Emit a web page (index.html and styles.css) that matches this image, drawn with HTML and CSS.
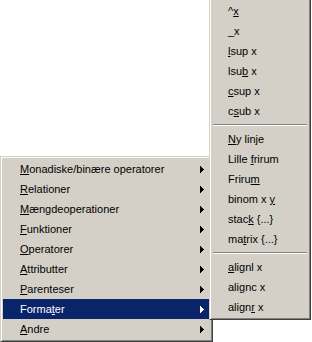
FILE: index.html
```html
<!DOCTYPE html>
<html lang="da">
<head>
<meta charset="utf-8">
<title>Menu</title>
<link rel="stylesheet" href="styles.css">
</head>
<body>
<div class="menu main">
  <div class="item"><span class="label"><u>M</u>onadiske/binære operatorer</span><svg class="arrow" width="4" height="7" viewBox="0 0 4 7"><rect x="0" y="0" width="1" height="7"/><rect x="1" y="1" width="1" height="5"/><rect x="2" y="2" width="1" height="3"/><rect x="3" y="3" width="1" height="1"/></svg></div>
  <div class="item"><span class="label"><u>R</u>elationer</span><svg class="arrow" width="4" height="7" viewBox="0 0 4 7"><rect x="0" y="0" width="1" height="7"/><rect x="1" y="1" width="1" height="5"/><rect x="2" y="2" width="1" height="3"/><rect x="3" y="3" width="1" height="1"/></svg></div>
  <div class="item"><span class="label"><u>M</u>ængdeoperationer</span><svg class="arrow" width="4" height="7" viewBox="0 0 4 7"><rect x="0" y="0" width="1" height="7"/><rect x="1" y="1" width="1" height="5"/><rect x="2" y="2" width="1" height="3"/><rect x="3" y="3" width="1" height="1"/></svg></div>
  <div class="item"><span class="label"><u>F</u>unktioner</span><svg class="arrow" width="4" height="7" viewBox="0 0 4 7"><rect x="0" y="0" width="1" height="7"/><rect x="1" y="1" width="1" height="5"/><rect x="2" y="2" width="1" height="3"/><rect x="3" y="3" width="1" height="1"/></svg></div>
  <div class="item"><span class="label"><u>O</u>peratorer</span><svg class="arrow" width="4" height="7" viewBox="0 0 4 7"><rect x="0" y="0" width="1" height="7"/><rect x="1" y="1" width="1" height="5"/><rect x="2" y="2" width="1" height="3"/><rect x="3" y="3" width="1" height="1"/></svg></div>
  <div class="item"><span class="label"><u>A</u>ttributter</span><svg class="arrow" width="4" height="7" viewBox="0 0 4 7"><rect x="0" y="0" width="1" height="7"/><rect x="1" y="1" width="1" height="5"/><rect x="2" y="2" width="1" height="3"/><rect x="3" y="3" width="1" height="1"/></svg></div>
  <div class="item"><span class="label"><u>P</u>arenteser</span><svg class="arrow" width="4" height="7" viewBox="0 0 4 7"><rect x="0" y="0" width="1" height="7"/><rect x="1" y="1" width="1" height="5"/><rect x="2" y="2" width="1" height="3"/><rect x="3" y="3" width="1" height="1"/></svg></div>
  <div class="item active"><span class="label">Forma<u>t</u>er</span><svg class="arrow" width="4" height="7" viewBox="0 0 4 7"><rect x="0" y="0" width="1" height="7"/><rect x="1" y="1" width="1" height="5"/><rect x="2" y="2" width="1" height="3"/><rect x="3" y="3" width="1" height="1"/></svg></div>
  <div class="item"><span class="label"><u>A</u>ndre</span><svg class="arrow" width="4" height="7" viewBox="0 0 4 7"><rect x="0" y="0" width="1" height="7"/><rect x="1" y="1" width="1" height="5"/><rect x="2" y="2" width="1" height="3"/><rect x="3" y="3" width="1" height="1"/></svg></div>
</div>
<div class="menu sub">
  <div class="item"><span class="label">^<u>x</u></span></div>
  <div class="item"><span class="label">_x</span></div>
  <div class="item"><span class="label"><u>l</u>sup x</span></div>
  <div class="item"><span class="label">lsu<u>b</u> x</span></div>
  <div class="item"><span class="label"><u>c</u>sup x</span></div>
  <div class="item"><span class="label">c<u>s</u>ub x</span></div>
  <div class="sep"></div>
  <div class="item"><span class="label"><u>N</u>y linje</span></div>
  <div class="item"><span class="label">Lille <u>f</u>rirum</span></div>
  <div class="item"><span class="label">Friru<u>m</u></span></div>
  <div class="item"><span class="label">binom x <u>y</u></span></div>
  <div class="item"><span class="label">stac<u>k</u> {...}</span></div>
  <div class="item"><span class="label">ma<u>t</u>rix {...}</span></div>
  <div class="sep"></div>
  <div class="item"><span class="label"><u>a</u>lignl x</span></div>
  <div class="item"><span class="label">ali<u>g</u>nc x</span></div>
  <div class="item"><span class="label">align<u>r</u> x</span></div>
</div>
</body>
</html>
```
FILE: styles.css
```css
html, body {
  margin: 0;
  padding: 0;
  background: #ffffff;
  overflow: hidden;
}

body {
  width: 312px;
  height: 342px;
  position: relative;
  font-family: "Liberation Sans", Arial, sans-serif;
  font-size: 11px;
  color: #000000;
}

.menu {
  position: absolute;
  box-sizing: border-box;
  background: #d4d0c8;
  border: 1px solid;
  border-color: #d4d0c8 #404040 #404040 #d4d0c8;
  box-shadow: inset 1px 1px 0 #ffffff, inset -1px -1px 0 #808080;
  padding: 2px;
  display: flex;
  flex-direction: column;
}

.main {
  left: 0;
  top: 156px;
  width: 213px;
  height: 186px;
}

.sub {
  left: 209px;
  top: -2px;
  width: 102px;
  z-index: 2;
}

.item {
  height: 20px;
  line-height: 20px;
  display: flex;
  align-items: center;
  padding-left: 17px;
  white-space: nowrap;
}

.sub .item {
  padding-left: 16px;
}

.label {
  flex: 0 0 auto;
}

.label u {
  text-decoration: underline;
  text-underline-offset: 1px;
}

.arrow {
  margin-left: auto;
  margin-right: 6px;
  fill: currentColor;
  shape-rendering: crispEdges;
  display: block;
}

.item.active {
  background: #0a246a;
  color: #ffffff;
}

.sep {
  height: 8px;
  box-sizing: border-box;
  padding: 3px 1px 0;
}

.sep::before {
  content: "";
  display: block;
  border-top: 1px solid #808080;
  border-bottom: 1px solid #ffffff;
}
```
